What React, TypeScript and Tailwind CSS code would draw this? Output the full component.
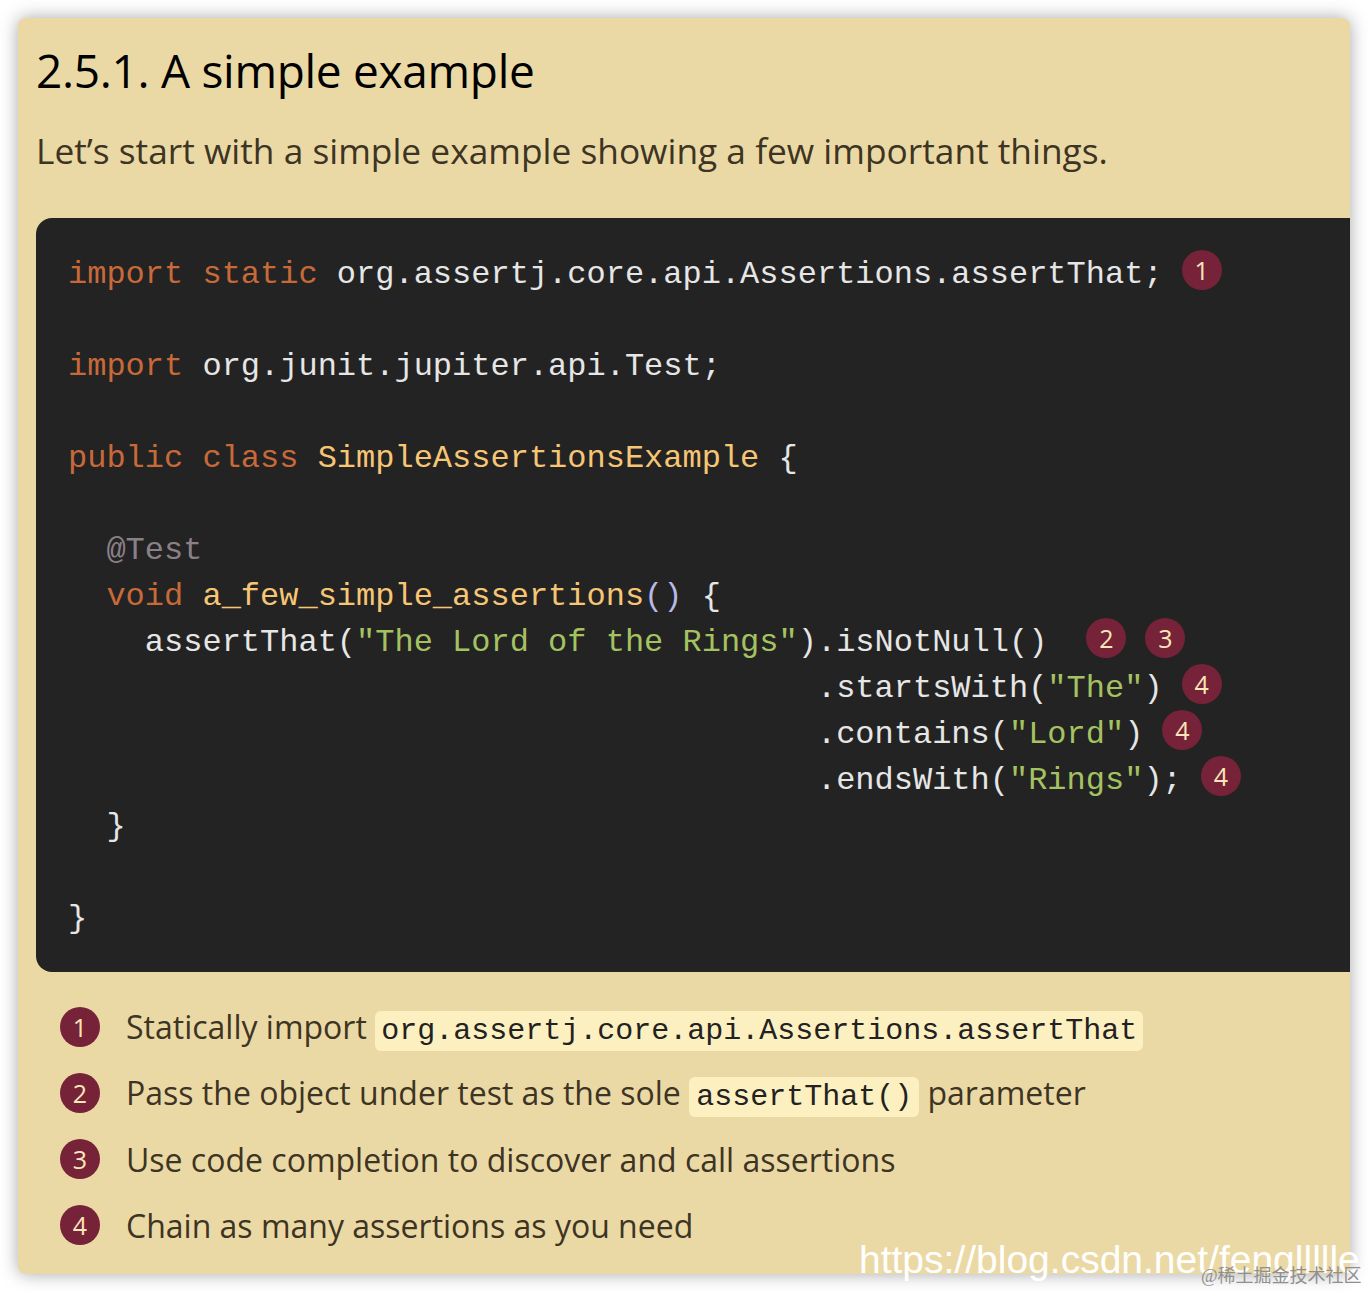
const mono = "font-['Liberation_Mono','DejaVu_Sans_Mono',monospace]";

function Callout({ n, className = "" }: { n: number; className?: string }) {
  return (
    <span
      className={`flex h-10 w-10 shrink-0 items-center justify-center rounded-full bg-[#762238] font-['Open_Sans',sans-serif] text-[25px] font-medium leading-none tracking-normal text-[#fbe6b8] ${className}`}
    >
      {n}
    </span>
  );
}

function Line({ children, marks }: { children?: React.ReactNode; marks?: React.ReactNode }) {
  return (
    <div className="flex h-[46px] items-center">
      <span className="whitespace-pre pt-[6px]">{children}</span>
      {marks}
    </div>
  );
}

const Kw = ({ children }: { children: React.ReactNode }) => <span className="text-[#c8693a]">{children}</span>;
const Str = ({ children }: { children: React.ReactNode }) => <span className="text-[#a5c261]">{children}</span>;
const Name = ({ children }: { children: React.ReactNode }) => <span className="text-[#f7c675]">{children}</span>;

const indent = " ".repeat(39);

const notes: React.ReactNode[] = [
  <>
    Statically import{" "}
    <code className={`${mono} rounded-md bg-[#fdf0c0] px-[6px] py-[3px] text-[30px] text-[#222]`}>
      org.assertj.core.api.Assertions.assertThat
    </code>
  </>,
  <>
    Pass the object under test as the sole{" "}
    <code className={`${mono} rounded-md bg-[#fdf0c0] px-[7px] py-[3px] text-[30px] text-[#222]`}>
      assertThat()
    </code>{" "}
    parameter
  </>,
  <>Use code completion to discover and call assertions</>,
  <>Chain as many assertions as you need</>,
];

export default function App() {
  return (
    <div className="relative h-[1292px] w-[1368px] overflow-hidden bg-white pl-[18px] pt-[18px]">
      <div className="h-[1256px] w-[1332px] rounded-lg bg-[#ebd9a5] pl-[18px] font-['Open_Sans',sans-serif] shadow-[0_0_18px_rgba(0,0,0,0.35)]">
        <h4 className="pt-[19px] text-[46px] leading-[66px] tracking-[-0.3px] text-black">2.5.1. A simple example</h4>
        <p className="mt-[21px] text-[35.3px] leading-[52px] text-[#3d3423]">
          Let’s start with a simple example showing a few important things.
        </p>

        <pre className={`${mono} mt-[42px] h-[754px] rounded-l-2xl bg-[#232323] pl-[32px] pt-[31px] text-[32px] text-[#e6e6e6]`}>
          <Line marks={<Callout n={1} className="-mt-1 ml-[19px]" />}>
            <Kw>import static</Kw> org.assertj.core.api.Assertions.assertThat;
          </Line>
          <Line />
          <Line>
            <Kw>import</Kw> org.junit.jupiter.api.Test;
          </Line>
          <Line />
          <Line>
            <Kw>public class</Kw> <Name>SimpleAssertionsExample</Name> {"{"}
          </Line>
          <Line />
          <Line>
            {"  "}
            <span className="text-[#8a8088]">@Test</span>
          </Line>
          <Line>
            {"  "}
            <Kw>void</Kw> <Name>a_few_simple_assertions</Name>
            <span className="text-[#b9b9e6]">()</span> {"{"}
          </Line>
          <Line
            marks={
              <>
                <Callout n={2} className="-mt-1 ml-[39px]" />
                <Callout n={3} className="-mt-1 ml-[19px]" />
              </>
            }
          >
            {"    "}assertThat(<Str>"The Lord of the Rings"</Str>).isNotNull()
          </Line>
          <Line marks={<Callout n={4} className="-mt-1 ml-[19px]" />}>
            {indent}.startsWith(<Str>"The"</Str>)
          </Line>
          <Line marks={<Callout n={4} className="-mt-1 ml-[19px]" />}>
            {indent}.contains(<Str>"Lord"</Str>)
          </Line>
          <Line marks={<Callout n={4} className="-mt-1 ml-[19px]" />}>
            {indent}.endsWith(<Str>"Rings"</Str>);
          </Line>
          <Line>{"  }"}</Line>
          <Line />
          <Line>{"}"}</Line>
        </pre>

        <ol className="mt-[23px] flex flex-col text-[32px] text-[#3d3423]">
          {notes.map((note, i) => (
            <li key={i} className="flex h-[66px] items-center pl-[24px]">
              <Callout n={i + 1} className="-mt-[2px] mr-[26px]" />
              <span className="whitespace-pre">{note}</span>
            </li>
          ))}
        </ol>
      </div>

      {/* csdn + juejin watermarks stamped over the screenshot */}
      <span className="absolute left-[859px] top-[1235px] font-['Liberation_Sans',sans-serif] text-[39px] leading-[50px] text-white">
        https://blog.csdn.net/fengllllle
      </span>
      <span className="absolute left-[1201px] top-[1266px] font-['Liberation_Serif','Noto_Sans_CJK_SC',serif] text-[18px] leading-[20px] text-[#8f8f8f]">
        @稀土掘金技术社区
      </span>
    </div>
  );
}
